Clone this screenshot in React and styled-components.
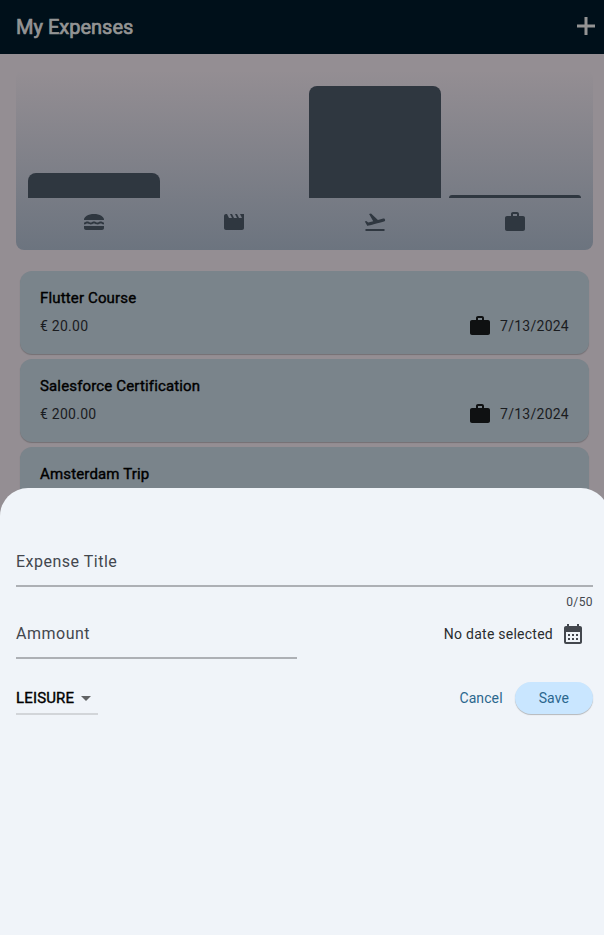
import React from "react";
import styled, { createGlobalStyle } from "styled-components";
import {
  MdArrowDropDown,
  MdCalendarMonth,
  MdFlightTakeoff,
  MdLunchDining,
  MdMovie,
  MdWork,
} from "react-icons/md";

const GlobalStyle = createGlobalStyle`
  *, *::before, *::after { box-sizing: border-box; }
  html, body { margin: 0; height: 100%; overflow: hidden; }
  #root { height: 100%; }
  body { font-family: Roboto, "Liberation Sans", sans-serif; color: #1a1c1e; }
  svg { display: block; flex: none; }
`;

const Screen = styled.div`
  position: relative;
  width: 609px;
  height: 935px;
  overflow: hidden;
  background: #948e93;
`;

const TopBar = styled.header`
  display: flex;
  align-items: center;
  justify-content: space-between;
  height: 54px;
  padding: 0 11px 0 16px;
  background: #00101a;
  color: #949494;
`;

const AppTitle = styled.h1`
  margin: 0;
  font-size: 20px;
  line-height: 28px;
  font-weight: 400;
  -webkit-text-stroke: 0.7px currentColor;
`;

const AddButton = styled.button`
  display: flex;
  margin: -2px 0 0;
  padding: 0;
  border: 0;
  background: none;
  color: #949494;
`;

const Chart = styled.section`
  display: flex;
  flex-direction: column;
  gap: 12px;
  height: 180px;
  margin: 16px;
  padding: 16px 8px;
  border-radius: 8px;
  background: linear-gradient(to top, #6c747f, rgba(108, 116, 127, 0));
`;

const Columns = styled.div`
  display: grid;
  grid-template-columns: repeat(4, 1fr);
  align-items: end;
  justify-items: center;
  height: ${(p) => p.$height}px;
`;

const Bar = styled.div`
  width: calc(100% - 8px);
  height: ${(p) => p.$value * 100}%;
  border-radius: 8px 8px 0 0;
  background: #2f3740;
`;

const ChartIcon = styled.span`
  color: #2f3740;
`;

const ExpenseList = styled.main`
  display: flex;
  flex-direction: column;
  gap: 5px;
  padding: 5px 20px 0;
`;

const Card = styled.article`
  display: flex;
  flex-direction: column;
  gap: 5px;
  height: 83px;
  padding: 16px 20px;
  border-radius: 12px;
  background: #7a848b;
  box-shadow: 0 1px 1px rgba(0, 0, 0, 0.22);
`;

const CardTitle = styled.h2`
  margin: 0;
  color: #000;
  font-size: 15px;
  line-height: 22px;
  font-weight: 400;
  letter-spacing: 0.15px;
  -webkit-text-stroke: 0.4px currentColor;
`;

const CardRow = styled.div`
  display: flex;
  align-items: center;
  justify-content: space-between;
  height: 24px;
  color: #1a1c1f;
  font-size: 14px;
  letter-spacing: 0.25px;

  svg { color: #0f1112; }
`;

const CardDate = styled.div`
  display: flex;
  align-items: center;
  gap: 8px;
`;

const Sheet = styled.form`
  position: absolute;
  inset: 488px 0 0;
  padding: 48px 16px 0;
  border-radius: 28px 28px 0 0;
  background: #f0f4f9;
`;

const Field = styled.label`
  display: flex;
  align-items: center;
  width: ${(p) => p.$width};
  height: ${(p) => p.$height}px;
  padding-top: ${(p) => p.$inset || 0}px;
  border-bottom: 2px solid #adb0b5;
  color: #43474e;
  font-size: 16px;
  letter-spacing: 0.5px;
`;

const Counter = styled.div`
  height: 22px;
  padding-top: 7px;
  color: #43474e;
  font-size: 12px;
  line-height: 16px;
  letter-spacing: 0.4px;
  text-align: right;
`;

const FormRow = styled.div`
  display: flex;
  align-items: flex-start;
  justify-content: space-between;
`;

const DatePicker = styled.div`
  display: flex;
  align-items: center;
  gap: 8px;
  height: 50px;
  padding-right: 8px;
  font-size: 14px;
  letter-spacing: 0.25px;
  color: #2a2c2e;

  svg { color: #43474e; }
`;

const Actions = styled.div`
  display: flex;
  align-items: center;
  justify-content: space-between;
  height: 34px;
  margin-top: 22px;
`;

const Select = styled.div`
  display: flex;
  align-items: center;
  width: 82px;
  height: 34px;
  padding-top: 2px;
  border-bottom: 2px solid #d2d5d9;
  color: #000;
  font-size: 15px;
  letter-spacing: 0.15px;
  -webkit-text-stroke: 0.4px currentColor;

  svg { color: #616365; stroke: none; }
`;

const Buttons = styled.div`
  display: flex;
  align-items: center;
  gap: 12px;
`;

const Button = styled.button`
  height: 32px;
  padding: 0 ${(p) => (p.$filled ? 24 : 0)}px;
  border: 0;
  border-radius: 16px;
  background: ${(p) => (p.$filled ? "#c9e6ff" : "none")};
  box-shadow: ${(p) => (p.$filled ? "0 1px 1px rgba(0, 0, 0, 0.25)" : "none")};
  color: #2b678e;
  font: 400 14px Roboto, sans-serif;
  letter-spacing: 0.1px;
`;

const categories = [
  { name: "food", value: 25 / 112, Icon: MdLunchDining },
  { name: "leisure", value: 0, Icon: MdMovie },
  { name: "travel", value: 1, Icon: MdFlightTakeoff },
  { name: "work", value: 3 / 112, Icon: MdWork },
];

const expenses = [
  { title: "Flutter Course", amount: "€ 20.00", date: "7/13/2024" },
  { title: "Salesforce Certification", amount: "€ 200.00", date: "7/13/2024" },
  { title: "Amsterdam Trip", amount: "€ 1000.00", date: "7/13/2024" },
];

function PlusIcon() {
  return (
    <svg width="24" height="24" viewBox="0 0 24 24" stroke="currentColor" strokeWidth="3">
      <path d="M12 3v18M3 12h18" />
    </svg>
  );
}

export default function App() {
  return (
    <Screen>
      <GlobalStyle />
      <TopBar>
        <AppTitle>My Expenses</AppTitle>
        <AddButton type="button" aria-label="Add expense">
          <PlusIcon />
        </AddButton>
      </TopBar>
      <Chart>
        <Columns $height={112}>
          {categories.map(({ name, value }) => (
            <Bar key={name} $value={value} />
          ))}
        </Columns>
        <Columns $height={24}>
          {categories.map(({ name, Icon }) => (
            <ChartIcon key={name}>
              <Icon size={24} />
            </ChartIcon>
          ))}
        </Columns>
      </Chart>
      <ExpenseList>
        {expenses.map((expense) => (
          <Card key={expense.title}>
            <CardTitle>{expense.title}</CardTitle>
            <CardRow>
              <span>{expense.amount}</span>
              <CardDate>
                <MdWork size={24} />
                <span>{expense.date}</span>
              </CardDate>
            </CardRow>
          </Card>
        ))}
      </ExpenseList>
      <Sheet>
        <Field $width="100%" $height={51} $inset={2}>Expense Title</Field>
        <Counter>0/50</Counter>
        <FormRow>
          <Field $width="280.5px" $height={50}>Ammount</Field>
          <DatePicker>
            <span>No date selected</span>
            <MdCalendarMonth size={24} />
          </DatePicker>
        </FormRow>
        <Actions>
          <Select>
            <span>LEISURE</span>
            <MdArrowDropDown size={24} />
          </Select>
          <Buttons>
            <Button type="button">Cancel</Button>
            <Button type="button" $filled>Save</Button>
          </Buttons>
        </Actions>
      </Sheet>
    </Screen>
  );
}
